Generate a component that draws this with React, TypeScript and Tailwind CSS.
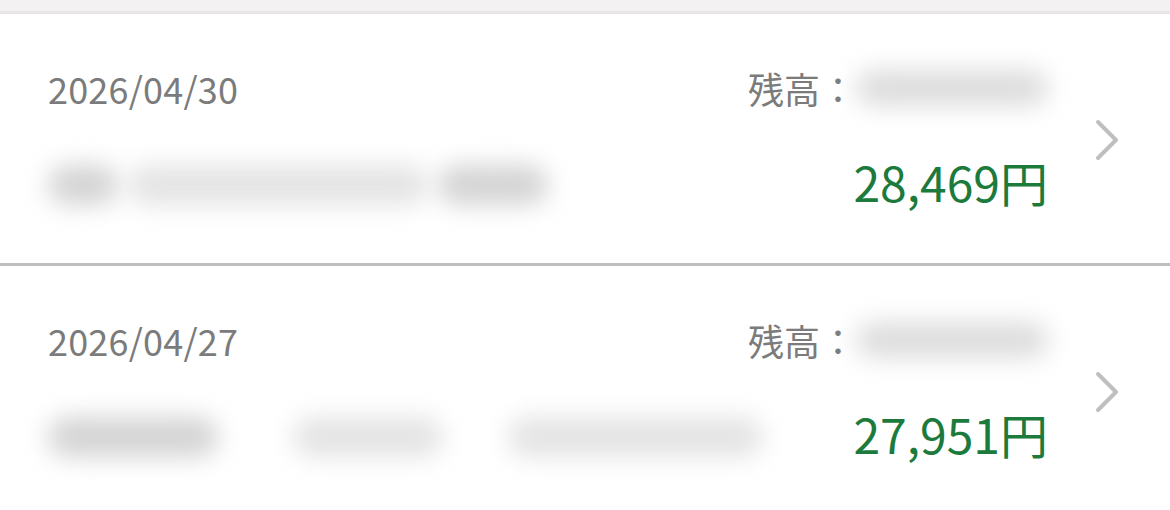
import React from 'react';

type Blob = { w: number; o: string; gap?: number };

type Row = {
  date: string;
  amount: string;
  blobs: Blob[];
};

const ROWS: Row[] = [
  {
    date: '2026/04/30',
    amount: '28,469円',
    blobs: [
      { w: 70, o: 'opacity-80' },
      { w: 300, o: 'opacity-50', gap: 10 },
      { w: 110, o: 'opacity-80', gap: 10 },
    ],
  },
  {
    date: '2026/04/27',
    amount: '27,951円',
    blobs: [
      { w: 170, o: 'opacity-80' },
      { w: 150, o: 'opacity-50', gap: 75 },
      { w: 255, o: 'opacity-50', gap: 65 },
    ],
  },
];

function Chevron() {
  return (
    <svg width="26" height="42" viewBox="0 0 26 42" fill="none" className="shrink-0">
      <path d="M4 3 L22 21 L4 39" stroke="#bfbfbf" strokeWidth="4" strokeLinecap="round" strokeLinejoin="round" />
    </svg>
  );
}

function HistoryRow({ row }: { row: Row }) {
  return (
    <div className="flex items-start pl-[48px] pr-[50px] h-[249px] pt-[56px] bg-white">
      <div className="flex-1 min-w-0 flex flex-col">
        <div className="text-[36px] leading-none text-[#7b7b7b] tracking-[0.2px]">{row.date}</div>
        <div className="flex items-center h-[60px] mt-[49px]">
          {row.blobs.map((b, i) => (
            <div
              key={i}
              style={{ width: b.w, marginLeft: b.gap ?? 0 }}
              className={`h-[40px] shrink-0 rounded-full bg-[#c9c9c9] blur-md ${b.o}`}
            />
          ))}
        </div>
      </div>
      <div className="flex flex-col items-end shrink-0">
        <div className="flex items-center text-[36px] leading-none text-[#7b7b7b] whitespace-nowrap">
          <span>残高：</span>
          <div className="w-[192px] h-[36px] rounded-full bg-[#d4d4d4] blur-md opacity-80" />
        </div>
        <div className="text-[48px] leading-none text-[#1b7a3c] mt-[51px] whitespace-nowrap">{row.amount}</div>
      </div>
      <div className="ml-[46px] self-center -mt-[54px]">
        <Chevron />
      </div>
    </div>
  );
}

export default function App() {
  return (
    <div
      className="w-[1170px] h-[510px] overflow-hidden bg-white"
      style={{ fontFamily: '"Noto Sans CJK JP", "Noto Sans", sans-serif' }}
    >
      <div className="h-[11px] bg-[#f3f1f2] border-b-[3px] border-[#e7e5e6] box-content" />
      <HistoryRow row={ROWS[0]} />
      <div className="h-[3px] bg-[#bdbdbd]" />
      <HistoryRow row={ROWS[1]} />
    </div>
  );
}
